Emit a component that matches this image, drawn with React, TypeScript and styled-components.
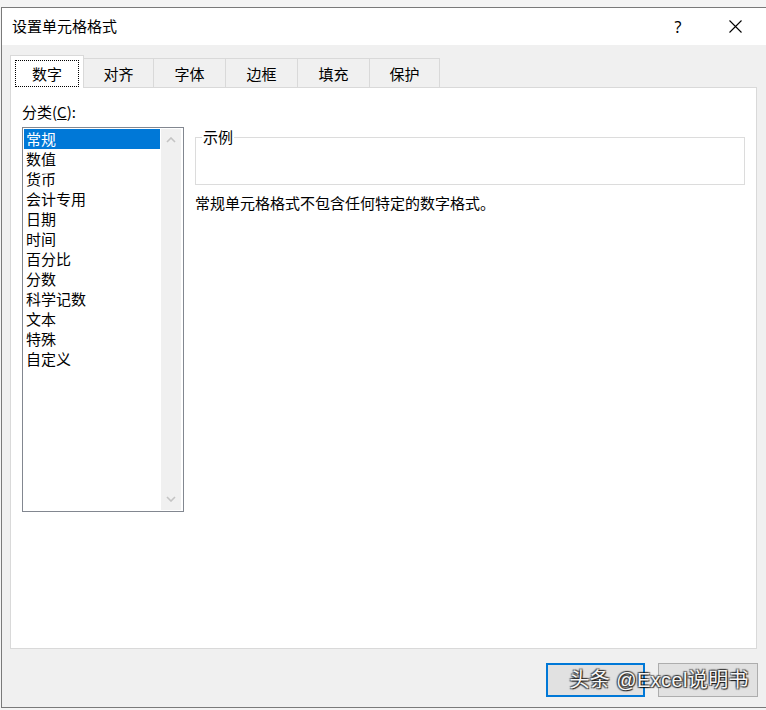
import React from "react";
import styled, { createGlobalStyle } from "styled-components";

const Global = createGlobalStyle`
  html, body { margin: 0; padding: 0; }
  body {
    background: #f4f4f4;
    overflow: hidden;
    font-family: "Noto Sans CJK SC", "Noto Sans", sans-serif;
    color: #000;
  }
`;

const Page = styled.div`
  padding: 7px 0 0 1px;
  width: 766px;
  height: 710px;
  box-sizing: border-box;
`;

const Window = styled.div`
  width: 780px;
  height: 701px;
  box-sizing: border-box;
  border: 1px solid #7a7a7a;
  border-right: none;
  background: #f0f0f0;
  display: flex;
  flex-direction: column;
`;

const TitleBar = styled.div`
  height: 37px;
  background: #fff;
  display: flex;
  align-items: center;
  padding-left: 10px;
  font-size: 15px;
  line-height: 20px;
`;

const Title = styled.div`
  flex: 1;
  margin-top: -2px;
`;

const TitleButton = styled.div<{ $w: number }>`
  width: ${(p) => p.$w}px;
  height: 37px;
  display: flex;
  align-items: center;
  justify-content: center;
  font-family: "Noto Sans", sans-serif;
  font-size: 16px;
`;

const TitleSpacer = styled.div`
  width: 12px;
`;

const Body = styled.div`
  flex: 1;
  padding: 10px 0 0 8px;
  display: flex;
  flex-direction: column;
`;

const TabRow = styled.div`
  display: flex;
  align-items: flex-end;
  height: 33px;
  margin-bottom: -1px;
`;

const Tab = styled.div<{ $w: number; $active?: boolean }>`
  box-sizing: border-box;
  width: ${(p) => p.$w}px;
  height: ${(p) => (p.$active ? 33 : 30)}px;
  margin-left: -1px;
  &:first-child { margin-left: 0; }
  border: 1px solid #d9d9d9;
  border-bottom: none;
  background: ${(p) => (p.$active ? "#fff" : "#f0f0f0")};
  position: ${(p) => (p.$active ? "relative" : "static")};
  z-index: ${(p) => (p.$active ? 1 : "auto")};
  display: flex;
  align-items: center;
  justify-content: center;
  padding-top: ${(p) => (p.$active ? 3 : 0)}px;
  font-size: 15px;
  line-height: 20px;
`;

const Focus = styled.span`
  box-sizing: border-box;
  width: 64px;
  height: 27px;
  border: 1px dotted #000;
  display: flex;
  align-items: center;
  justify-content: center;
`;

const Panel = styled.div`
  box-sizing: border-box;
  width: 747px;
  height: 562px;
  background: #fff;
  border: 1px solid #d9d9d9;
  padding: 14px 0 0 11px;
  display: grid;
  grid-template-columns: 162px 550px;
  column-gap: 11px;
  align-content: start;
`;

const LeftCol = styled.div`
  display: flex;
  flex-direction: column;
  gap: 5px;
`;

const Label = styled.div`
  font-size: 15px;
  line-height: 20px;
  height: 20px;
`;

const ListBox = styled.div`
  box-sizing: border-box;
  width: 162px;
  height: 385px;
  border: 1px solid #828790;
  padding: 1px;
  display: flex;
`;

const Items = styled.div`
  flex: 1;
  display: flex;
  flex-direction: column;
`;

const Item = styled.div<{ $sel?: boolean }>`
  height: 20px;
  line-height: 20px;
  font-size: 15px;
  padding-left: 2px;
  margin-right: 1px;
  background: ${(p) => (p.$sel ? "#0078d7" : "transparent")};
  color: ${(p) => (p.$sel ? "#fff" : "#000")};
`;

const ScrollBar = styled.div`
  width: 20px;
  margin-right: 1px;
  background: #f0f0f0;
  display: flex;
  flex-direction: column;
  justify-content: space-between;
`;

const Arrow = styled.div`
  height: 22px;
  display: flex;
  align-items: center;
  justify-content: center;
`;

const RightCol = styled.div`
  padding-top: 25px;
  display: flex;
  flex-direction: column;
`;

const Group = styled.fieldset`
  margin: 0;
  padding: 0;
  height: 58px;
  box-sizing: border-box;
  border: 1px solid #dcdcdc;
  min-width: 0;
`;

const Legend = styled.legend`
  margin-left: 6px;
  padding: 0 1px;
  font-size: 15px;
  line-height: 20px;
`;

const Desc = styled.div`
  margin-top: 8px;
  font-size: 15px;
  line-height: 20px;
`;

const Footer = styled.div`
  position: relative;
  width: 748px;
  margin-top: 14px;
  display: flex;
  justify-content: flex-end;
  gap: 13px;
`;

const Button = styled.div<{ $primary?: boolean }>`
  box-sizing: border-box;
  width: ${(p) => (p.$primary ? 99 : 100)}px;
  height: 34px;
  background: #e1e1e1;
  border: ${(p) => (p.$primary ? "2px solid #0078d7" : "1px solid #adadad")};
`;

const Watermark = styled.div`
  position: absolute;
  right: 9px;
  top: 50%;
  transform: translateY(-50%);
  font-family: "Liberation Sans", "Noto Sans CJK SC", sans-serif;
  font-size: 20px;
  letter-spacing: 0.4px;
  line-height: 28px;
  color: #f6f6f6;
  white-space: nowrap;
  text-shadow: 1px 1px 1px rgba(0,0,0,0.8), -1px -1px 1px rgba(0,0,0,0.55),
    1px -1px 1px rgba(0,0,0,0.55), -1px 1px 1px rgba(0,0,0,0.55);
`;

const tabs: [string, number][] = [
  ["数字", 74],
  ["对齐", 71],
  ["字体", 73],
  ["边框", 73],
  ["填充", 73],
  ["保护", 71],
];

const items = ["常规", "数值", "货币", "会计专用", "日期", "时间", "百分比", "分数", "科学记数", "文本", "特殊", "自定义"];

const Chevron = ({ up }: { up?: boolean }) => (
  <svg width="10" height="6" viewBox="0 0 10 6">
    <polyline
      points={up ? "1,5 5,1 9,5" : "1,1 5,5 9,1"}
      fill="none"
      stroke="#c4c4c4"
      strokeWidth="1.6"
    />
  </svg>
);

export default function App() {
  return (
    <>
      <Global />
      <Page>
        <Window>
          <TitleBar>
            <Title>设置单元格格式</Title>
            <TitleButton $w={46}>?</TitleButton>
            <TitleButton $w={68}>
              <svg width="13" height="13" viewBox="0 0 13 13">
                <path d="M0.5 0.5 L12.5 12.5 M12.5 0.5 L0.5 12.5" stroke="#000" strokeWidth="1.1" />
              </svg>
            </TitleButton>
            <TitleSpacer />
          </TitleBar>
          <Body>
            <TabRow>
              {tabs.map(([t, w], i) => (
                <Tab key={t} $w={w} $active={i === 0}>
                  {i === 0 ? <Focus>{t}</Focus> : t}
                </Tab>
              ))}
            </TabRow>
            <Panel>
              <LeftCol>
                <Label>
                  分类(<u>C</u>):
                </Label>
                <ListBox>
                  <Items>
                    {items.map((it, i) => (
                      <Item key={it} $sel={i === 0}>
                        {it}
                      </Item>
                    ))}
                  </Items>
                  <ScrollBar>
                    <Arrow>
                      <Chevron up />
                    </Arrow>
                    <Arrow>
                      <Chevron />
                    </Arrow>
                  </ScrollBar>
                </ListBox>
              </LeftCol>
              <RightCol>
                <Group>
                  <Legend>示例</Legend>
                </Group>
                <Desc>常规单元格格式不包含任何特定的数字格式。</Desc>
              </RightCol>
            </Panel>
            <Footer>
              <Button $primary />
              <Button />
              <Watermark>头条 @Excel说明书</Watermark>
            </Footer>
          </Body>
        </Window>
      </Page>
    </>
  );
}
